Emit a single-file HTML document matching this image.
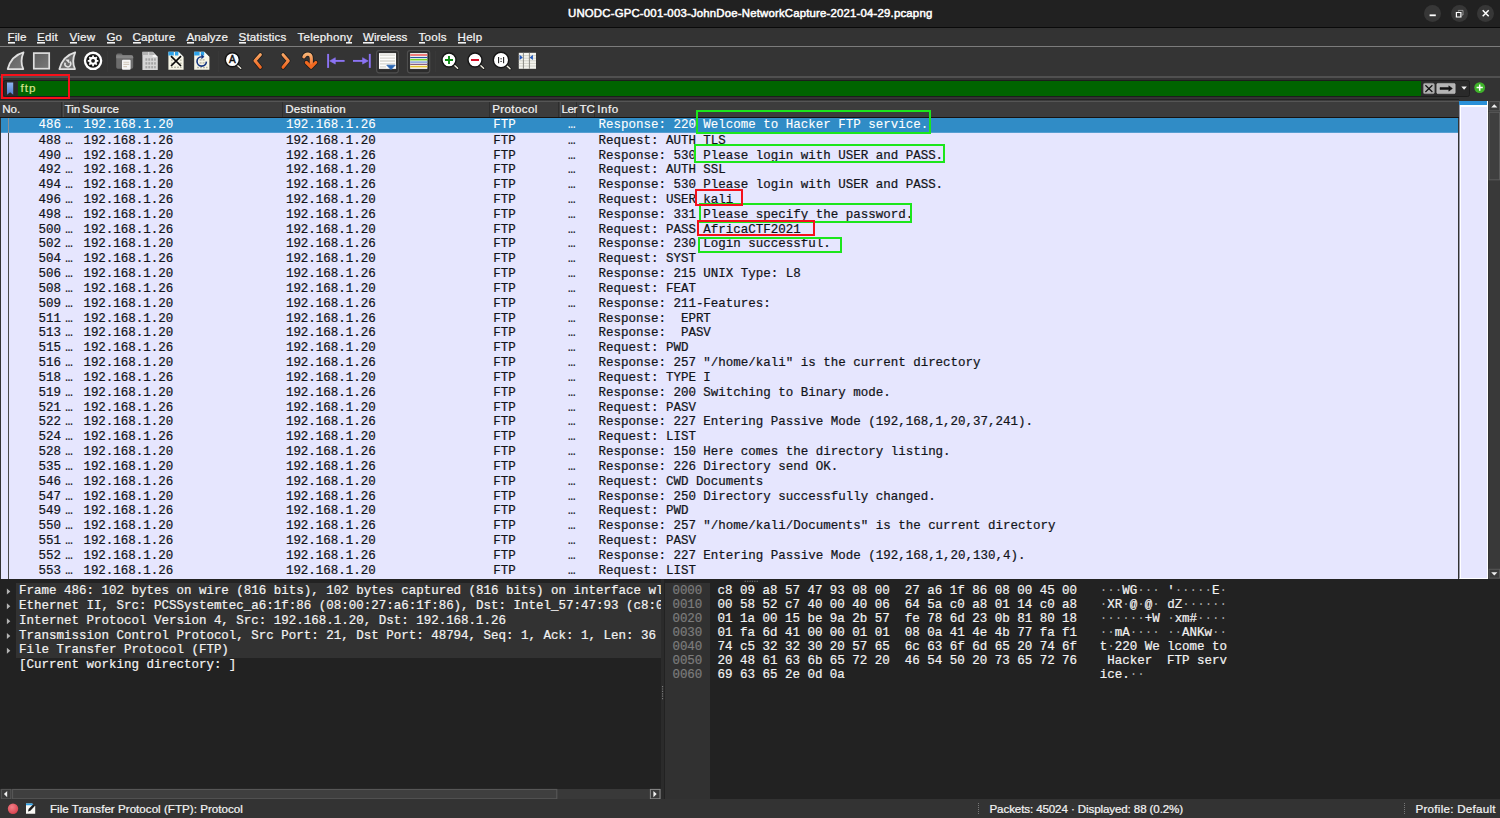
<!DOCTYPE html>
<html><head><meta charset="utf-8"><title>Wireshark</title>
<style>
*{box-sizing:border-box;margin:0;padding:0}
html,body{width:1500px;height:818px;overflow:hidden;background:#333;}
body{position:relative;-webkit-text-stroke:0.22px;font-family:"Liberation Sans",sans-serif;color:#f2f2f2;font-size:11.6px}
.abs{position:absolute}
.ui{position:absolute;white-space:nowrap;font-size:11.6px;line-height:14px;color:#f3f3f3;transform-origin:0 0}
#title{left:0;top:0;width:1500px;height:27.4px;background:#212121}
.wb{position:absolute;top:4.6px;width:17.2px;height:17.2px;border-radius:50%;background:#373737}
#menu{left:0;top:27px;width:1500px;height:19px;background:#333}
u{text-decoration:none;background:linear-gradient(#f3f3f3,#f3f3f3) no-repeat 0 100%/100% 1.6px;padding-bottom:1.1px}
#sep1{left:0;top:46px;width:1500px;height:1px;background:#7c7c7c}
#tool{left:0;top:47px;width:1500px;height:29px;background:#343434}
#sep2{left:0;top:76px;width:1500px;height:1.5px;background:#505050}
#fbar{left:0;top:77.5px;width:1500px;height:23px;background:#333}
#ffield{left:3.2px;top:79.6px;width:1466.8px;height:17.4px;background:#2a2a2a;border-radius:2.5px;border:1px solid #1d1d1d}
#fgreen{left:17.5px;top:80.5px;width:1403.5px;height:15.5px;background:#006400}
#redbox{left:1.3px;top:74.3px;width:68.6px;height:24.8px;border:2.7px solid #f8101a}
#hdr{left:0;top:99.3px;width:1459px;height:18.6px;background:linear-gradient(#222 0,#222 1.4px,#555 1.6px,#555 2.9px,#3c3c3c 3.1px,#3c3c3c 100%);border-bottom:1.1px solid #17120f}
#hdr i{position:absolute;top:3px;width:2.6px;height:14.4px;background:linear-gradient(90deg,#2e2e2e 0,#2e2e2e 1px,#3c3c3c 1px,#3c3c3c 1.6px,#4e4e4e 1.6px)}
#list{left:.9px;top:117.9px;width:1457.5px;height:460.9px;background:#e6e6fe;overflow:hidden;font-family:"Liberation Mono",monospace;font-size:12.495px;color:#12141a}
.r{position:relative;height:14.83px;line-height:14.83px;white-space:pre}
.r.sel{-webkit-text-stroke:0.1px;background:linear-gradient(#308cc6,#308cc6) no-repeat;background-size:100% 14.8px;color:#fff;height:15.8px}
.c{position:absolute;top:0}
.r.sel .c{top:.4px}
.no{left:0;width:60px;text-align:right}
.tm{left:64.3px}
.src{left:82.5px}
.dst{left:285px}
.pr{left:492.4px}
.ln{left:567.2px}
.inf{left:597.6px}
#rel{left:7.8px;top:117.6px;width:1.5px;height:461.2px;background:#4a4a4a}
#mini{left:1459px;top:101px;width:29px;height:477.8px;background:#e6e6fe;border:1.6px solid #fff;border-left:1px solid #9a9aa8;border-top:0}
#mini b{position:absolute;left:-1px;right:-.4px;top:0;z-index:2;height:4.4px;background:#2a90d8}
#mini s{position:absolute;left:1px;right:0;top:4.4px;height:1.2px;background:#fff}
#mini em{position:absolute;left:0;top:0;bottom:0;width:1px;background:#fff}
#vsb{left:1488.6px;top:101px;width:11.4px;height:477.8px;background:#393939}
#detail{left:0;top:578.8px;width:660.7px;height:210px;background:#222;overflow:hidden;font-family:"Liberation Mono",monospace;font-size:12.495px;color:#f2f2f2}
#detail .d{position:absolute;left:19.1px;width:660px;height:14.83px;line-height:14.83px;white-space:pre}
#dbg{position:absolute;left:15.8px;top:4.4px;width:660px;height:74.5px;background:#323232}
#detail svg{position:absolute;left:0;top:0}
#hsb{left:0;top:788.8px;width:660.7px;height:10.4px;background:#393939}
#split{left:660.7px;top:578.8px;width:3.7px;height:220.4px;background:#2b2b2b}
#hex{left:664.4px;top:578.8px;width:835.6px;height:220.4px;background:#222;overflow:hidden;font-family:"Liberation Mono",monospace;font-size:12.495px;color:#f2f2f2}
#hexoff{position:absolute;left:.5px;top:4.7px;width:45.3px;height:100%;background:#313131}
.h{position:absolute;left:0;height:14.05px;line-height:14.05px;white-space:pre}
.h .o{position:absolute;left:8px;color:#7c7c7c}
.h .b{position:absolute;left:53.1px}
.dt{color:#a6a6a6;-webkit-text-stroke:0}
.h .a{position:absolute;left:435.3px}
#status{left:0;top:799.2px;width:1500px;height:18.8px;background:#333}
.box{position:absolute;border:2.5px solid #1ce61c}
.box.red{border-color:#f5111b}
</style></head><body>
<div id="title" class="abs">
<div class="wb" style="left:1424.1px"></div><div class="wb" style="left:1450.8px"></div><div class="wb" style="left:1477.2px"></div>
<svg class="abs" style="left:1420px;top:0" width="80" height="27" viewBox="1420 0 80 27"><g stroke="#fff" stroke-width="1.3" fill="none"><path d="M1429.6 15.3h6.2" stroke-width="1.8"/><path d="M1456.4 12.5h4.5v4.5h-4.5z" stroke-width="1.2"/><path d="M1458.4 11.6v-1.2h4.6v4.6h-1.2" stroke="#a8a8a8" stroke-width=".8"/><path d="M1482.7 10.3l6 6m0-6l-6 6" stroke-width="1.5"/></g></svg>
</div>
<div id="menu" class="abs"></div>
<div id="sep1" class="abs"></div>
<div class="abs" style="left:0;top:26.5px;width:1500px;height:1.3px;background:#0a0a0a"></div>
<div id="tool" class="abs"></div>
<svg class="abs" style="left:0;top:47px" width="545" height="30" viewBox="0 47 545 30">
<defs>
<linearGradient id="og" gradientUnits="userSpaceOnUse" x1="0" y1="53" x2="0" y2="69"><stop offset="0" stop-color="#f9ac6a"/><stop offset="1" stop-color="#ee5f18"/></linearGradient>
<linearGradient id="gg" x1="0" y1="0" x2="1" y2="1"><stop offset="0" stop-color="#5e5e5e"/><stop offset="1" stop-color="#787878"/></linearGradient>
<linearGradient id="og2" gradientUnits="userSpaceOnUse" x1="0" y1="52" x2="0" y2="68"><stop offset="0" stop-color="#f9bd80"/><stop offset="1" stop-color="#f0641e"/></linearGradient>
</defs>
<!-- start capture fin -->
<path d="M23.5 52.3 C15.3 54.5 9.8 61 7.7 69.1 L23.3 69.1 C21.1 64.5 20.9 58.5 23.5 52.3Z" fill="url(#gg)" stroke="#e0e0e0" stroke-width="1.8" stroke-linejoin="round"/>
<!-- stop square -->
<rect x="33.8" y="53.1" width="15.4" height="15.6" fill="url(#gg)" stroke="#dedede" stroke-width="1.7"/>
<!-- restart fin -->
<path d="M75.2 52.3 C67 54.5 61.5 61 59.4 69.1 L75 69.1 C72.8 64.5 72.6 58.5 75.2 52.3Z" fill="url(#gg)" stroke="#e0e0e0" stroke-width="1.8" stroke-linejoin="round"/>
<path d="M65.3 62.6 a2.9 2.9 0 1 0 4.3 -0.9" fill="none" stroke="#e4e4e4" stroke-width="1.5"/>
<path d="M65.2 59.6 h4 v4z" fill="#e4e4e4"/>
<!-- options gear -->
<circle cx="93.05" cy="60.85" r="8.1" fill="#141414" stroke="#fff" stroke-width="2.3"/>
<g stroke="#fff" stroke-width="1.7"><path d="M93.05 55.55v10.6M87.75 60.85h10.6M89.3 57.1l7.5 7.5M89.3 64.6l7.5-7.5"/></g>
<circle cx="93.05" cy="60.85" r="4" fill="#fff"/>
<circle cx="93.05" cy="60.85" r="1.9" fill="#1c1c1c"/>
<!-- sep -->
<rect x="107" y="51" width="1" height="21" fill="#383838"/>
<!-- open folder -->
<path d="M116.2 55.2 q0-1.6 1.6-1.6 h3.6 l1.6 1.7 h8.4 q1.8 0 1.8 1.8 v10 q0 1.6-1.6 1.6 h-13.8 q-1.6 0-1.6-1.6z" fill="#6c6c6c"/>
<path d="M116.2 58.2h17v-1.2q0-1.7-1.8-1.7h-15.2z" fill="#858585"/>
<rect x="122" y="59.8" width="8.6" height="10" rx="1" fill="#f6f6f6"/>
<g stroke="#d2c9bc" stroke-width="1.1"><path d="M123.4 62.2h5.8M123.4 64.4h5.8M123.4 66.6h3.6"/></g>
<!-- save (disabled) -->
<path d="M142.4 51.8h10.2l5.2 5.2v13h-15.4z" fill="#d6d6d6"/>
<path d="M152.6 51.8l5.2 5.2h-5.2z" fill="#f4f4f4"/>
<path d="M142.6 52h5.4v3h-5.4zM149.2 52h3.4l2 2v1h-5.4z" fill="#b2b2b2"/>
<g fill="#a2a2a2"><rect x="145.4" y="58.3" width="1.9" height="2.4"/><rect x="148.3" y="58.3" width="1.9" height="2.4"/><rect x="151.2" y="58.3" width="1.9" height="2.4"/><rect x="154.1" y="58.3" width="1.7" height="2.4"/>
<rect x="145.4" y="62.2" width="1.9" height="2.4"/><rect x="148.3" y="62.2" width="1.9" height="2.4"/><rect x="151.2" y="62.2" width="1.9" height="2.4"/><rect x="154.1" y="62.2" width="1.7" height="2.4"/>
<rect x="145.4" y="66.1" width="1.9" height="2.2"/><rect x="148.3" y="66.1" width="1.9" height="2.2"/><rect x="151.2" y="66.1" width="1.9" height="2.2"/><rect x="154.1" y="66.1" width="1.7" height="2.2"/></g>
<!-- close file -->
<path d="M168.4 51.8h10l5.2 5.2v12.8h-15.2z" fill="#f6f5e6"/>
<path d="M168.4 51.8h5.4v3.6h-5.4zM175 51.8h3.4l3.4 3.6h-6.8z" fill="#2ea3ea"/>
<path d="M178.4 51.8l5.2 5.2h-5.2z" fill="#fbfbf3"/>
<g fill="#b9b9a9"><rect x="171" y="66.6" width="2" height="1.4"/><rect x="174" y="66.6" width="2" height="1.4"/><rect x="177" y="66.6" width="2" height="1.4"/><rect x="180" y="66.6" width="1.6" height="1.4"/><rect x="171" y="59.4" width="1.6" height="1.4"/><rect x="180" y="59.4" width="1.6" height="1.4"/><rect x="171" y="62.6" width="1.6" height="1.4"/><rect x="180" y="62.6" width="1.6" height="1.4"/></g>
<path d="M171 56.2l10 9.8M181 56.2l-10 9.8" stroke="#0a0a0a" stroke-width="1.7" fill="none"/>
<!-- reload -->
<path d="M194.2 51.8h10l5.2 5.2v12.8h-15.2z" fill="#f6f5e6"/>
<path d="M194.2 51.8h5.4v3.6h-5.4zM200.8 51.8h3.4l3.4 3.6h-6.8z" fill="#2ea3ea"/>
<path d="M204.2 51.8l5.2 5.2h-5.2z" fill="#fbfbf3"/>
<g fill="#b9b9a9"><rect x="197" y="66.8" width="2" height="1.4"/><rect x="200" y="66.8" width="2" height="1.4"/><rect x="203" y="66.8" width="2" height="1.4"/><rect x="206" y="66.8" width="1.6" height="1.4"/><rect x="199.6" y="59.2" width="2" height="1.4"/><rect x="202.6" y="59.2" width="2" height="1.4"/><rect x="199.6" y="62.2" width="2" height="1.4"/><rect x="202.6" y="62.2" width="2" height="1.4"/></g>
<path d="M206.4 61.6 a4.7 4.7 0 1 1 -4.7 -4.9" fill="none" stroke="#13347f" stroke-width="1.6"/>
<path d="M201.4 54.2l3 2.5-3 2.5z" fill="#13347f"/>
<!-- sep -->
<rect x="218" y="51" width="1" height="21" fill="#383838"/>
<!-- find -->
<path d="M237 65l3.8 3.3" stroke="#1c1c1c" stroke-width="2.8" stroke-linecap="round"/>
<path d="M237 65l3.7 3.2" stroke="#efece0" stroke-width="1.5" stroke-linecap="round"/>
<circle cx="232.3" cy="59.8" r="7" fill="#fff" stroke="#141414" stroke-width="1.4"/>
<text x="232.3" y="63.3" font-family="Liberation Sans, sans-serif" font-size="10" text-anchor="middle" fill="#111" stroke="#111" stroke-width=".45">A</text>
<!-- back / fwd -->
<g fill="none" stroke-linecap="round" stroke-linejoin="round">
<path d="M260.3 54.7l-5.3 6 5.3 6.6" stroke="#1a1a1a" stroke-width="4.4"/>
<path d="M260.3 54.7l-5.3 6 5.3 6.6" stroke="url(#og)" stroke-width="3"/>
<path d="M283 54.7l5.3 6-5.3 6.6" stroke="#1a1a1a" stroke-width="4.4"/>
<path d="M283 54.7l5.3 6-5.3 6.6" stroke="url(#og)" stroke-width="3"/>
<!-- goto -->
<path d="M303.9 56.8c1.6-3.6 7.4-4 7.4 1.6v7.4M306.4 62.5l4.7 4.7 4.6-4.7" stroke="#1a1a1a" stroke-width="4.6"/>
<path d="M303.9 56.8c1.6-3.6 7.4-4 7.4 1.6v7.4" stroke="url(#og2)" stroke-width="3.2"/>
<path d="M306.4 62.5l4.7 4.7 4.6-4.7" stroke="#f0681f" stroke-width="3.2"/>
</g>
<!-- first / last -->
<g stroke="#8b73f3" stroke-width="1.9" fill="none"><path d="M328.1 53.9v14"/><path d="M332 60.9h12.6"/><path d="M369.8 53.9v14"/><path d="M353 60.9h12.6"/></g>
<path d="M329.7 60.9l5.6-3.2v6.4zM368.2 60.9l-5.6-3.2v6.4z" fill="#8b73f3" stroke="#8b73f3" stroke-width=".6" stroke-linejoin="round"/>
<!-- autoscroll (checked) -->
<rect x="376.6" y="50.6" width="21.8" height="22.2" rx="2.5" fill="#2c2c2c" stroke="#4e4e4e" stroke-width="1.2"/>
<rect x="378.7" y="52.8" width="17.6" height="16.4" fill="#fdfdfb" stroke="#111" stroke-width=".6"/>
<g stroke="#d6d6d0" stroke-width="1.3"><path d="M380 55.2h15M380 58.1h15M380 61h15M380 63.9h15M380 66.8h6"/></g>
<path d="M386.8 65.2h8.4l-4.2 4.4z" fill="#2a66b4" stroke="#2a66b4" stroke-width=".8" stroke-linejoin="round"/>
<!-- colorize -->
<rect x="407.5" y="50.6" width="22.2" height="22.2" rx="2.5" fill="#2c2c2c" stroke="#4e4e4e" stroke-width="1.2"/>
<rect x="409.8" y="52.8" width="18" height="16.4" fill="#fdfdfb" stroke="#111" stroke-width=".6"/>
<g stroke-width="1.6"><path d="M410.2 55h17.2" stroke="#ee5d5d"/><path d="M410.2 57.5h17.2" stroke="#2b56a0" stroke-width="1.2"/><path d="M410.2 59.7h17.2" stroke="#78d32a"/><path d="M410.2 62.1h17.2" stroke="#8aa6dc"/><path d="M410.2 64.3h17.2" stroke="#73446f" stroke-width="1.1"/><path d="M410.2 66.6h17.2" stroke="#e4c02c"/></g>
<!-- sep -->
<rect x="435" y="51" width="1" height="21" fill="#383838"/>
<!-- zoom in/out/1:1 -->
<path d="M453.8 64.8l3.9 3.6" stroke="#1a1a1a" stroke-width="2.9" stroke-linecap="round"/>
<path d="M453.8 64.8l3.8 3.5" stroke="#efece0" stroke-width="1.5" stroke-linecap="round"/>
<circle cx="449" cy="60" r="7" fill="#fff" stroke="#141414" stroke-width="1.4"/>
<path d="M445 60h8M449 56v8" stroke="#0c8a14" stroke-width="1.9"/>
<path d="M479.8 64.8l3.9 3.6" stroke="#1a1a1a" stroke-width="2.9" stroke-linecap="round"/>
<path d="M479.8 64.8l3.8 3.5" stroke="#efece0" stroke-width="1.5" stroke-linecap="round"/>
<circle cx="475" cy="60" r="7" fill="#fff" stroke="#141414" stroke-width="1.4"/>
<path d="M471 60h8" stroke="#d2021c" stroke-width="1.9"/>
<path d="M506.2 65.2l3.9 3.6" stroke="#1a1a1a" stroke-width="2.9" stroke-linecap="round"/>
<path d="M506.2 65.2l3.8 3.5" stroke="#efece0" stroke-width="1.5" stroke-linecap="round"/>
<circle cx="501" cy="60" r="7.7" fill="#fff" stroke="#141414" stroke-width="1.4"/>
<path d="M498.6 57v6.2M503.6 57v6.2" stroke="#222" stroke-width="1.1"/><path d="M500.4 58.8h1.4M500.4 61.4h1.4" stroke="#222" stroke-width="1"/>
<!-- resize cols -->
<rect x="518.8" y="52.8" width="17.2" height="16" fill="#f4f4ee"/>
<g stroke="#c9c9c0" stroke-width=".8"><path d="M518.8 55.6h17.2M518.8 58.2h17.2M518.8 60.8h17.2M518.8 63.4h17.2M518.8 66h17.2"/></g>
<g stroke="#8a8a84" stroke-width="1"><path d="M523.4 52.8v16M529.4 52.8v16"/></g>
<path d="M519.6 54.8l3.2 2.6-3.2 2.6zM532.9 54.8l-3.2 2.6 3.2 2.6z" fill="#2359bd"/>
</svg>

<div id="sep2" class="abs"></div>
<div id="fbar" class="abs"></div>
<div id="ffield" class="abs"></div>
<div id="fgreen" class="abs"></div>
<svg class="abs" style="left:0;top:77px" width="1500" height="24" viewBox="0 77 1500 24">
<defs><linearGradient id="bk" x1="0" y1="0" x2="0" y2="1"><stop offset="0" stop-color="#8db4ee"/><stop offset="1" stop-color="#4f7fd0"/></linearGradient></defs>
<path d="M7 82.6h6.2v12.2l-3.1-2.6-3.1 2.6z" fill="url(#bk)"/>
<rect x="1423.4" y="83.3" width="11" height="10.4" rx="1.5" fill="#b0b0b0" stroke="#8a8a8a" stroke-width=".6"/>
<path d="M1425.4 85.2l7 6.8m0-6.8l-7 6.8" stroke="#111" stroke-width="1.2"/>
<rect x="1436.8" y="83.4" width="18.4" height="10.2" rx="1.2" fill="#b4b4b4" stroke="#cfcfcf" stroke-width=".5"/>
<path d="M1440 87.5h8.8v-1.7l3.6 2.7-3.6 2.7v-1.7h-8.8z" fill="#111" stroke="#111" stroke-width=".5" stroke-linejoin="round"/>
<path d="M1461.3 86.6h5.6l-2.8 3.2z" fill="#f0f0f0"/>
<circle cx="1479.7" cy="87.6" r="5.4" fill="#3fb32a"/>
<path d="M1476.6 87.6h6.2m-3.1-3.1v6.2" stroke="#fff" stroke-width="1.5"/>
</svg>
<div id="redbox" class="abs"></div>
<div id="hdr" class="abs"><i style="left:61px"></i><i style="left:78.6px"></i><i style="left:281.6px"></i><i style="left:488.6px"></i><i style="left:558.2px"></i><i style="left:575.9px"></i><i style="left:593.9px"></i></div>
<div id="list" class="abs">
<div class="r sel"><span class="c no">486</span><span class="c tm">…</span><span class="c src">192.168.1.20</span><span class="c dst">192.168.1.26</span><span class="c pr">FTP</span><span class="c ln">…</span><span class="c inf">Response: 220 Welcome to Hacker FTP service.</span></div>
<div class="r"><span class="c no">488</span><span class="c tm">…</span><span class="c src">192.168.1.26</span><span class="c dst">192.168.1.20</span><span class="c pr">FTP</span><span class="c ln">…</span><span class="c inf">Request: AUTH TLS</span></div>
<div class="r"><span class="c no">490</span><span class="c tm">…</span><span class="c src">192.168.1.20</span><span class="c dst">192.168.1.26</span><span class="c pr">FTP</span><span class="c ln">…</span><span class="c inf">Response: 530 Please login with USER and PASS.</span></div>
<div class="r"><span class="c no">492</span><span class="c tm">…</span><span class="c src">192.168.1.26</span><span class="c dst">192.168.1.20</span><span class="c pr">FTP</span><span class="c ln">…</span><span class="c inf">Request: AUTH SSL</span></div>
<div class="r"><span class="c no">494</span><span class="c tm">…</span><span class="c src">192.168.1.20</span><span class="c dst">192.168.1.26</span><span class="c pr">FTP</span><span class="c ln">…</span><span class="c inf">Response: 530 Please login with USER and PASS.</span></div>
<div class="r"><span class="c no">496</span><span class="c tm">…</span><span class="c src">192.168.1.26</span><span class="c dst">192.168.1.20</span><span class="c pr">FTP</span><span class="c ln">…</span><span class="c inf">Request: USER kali</span></div>
<div class="r"><span class="c no">498</span><span class="c tm">…</span><span class="c src">192.168.1.20</span><span class="c dst">192.168.1.26</span><span class="c pr">FTP</span><span class="c ln">…</span><span class="c inf">Response: 331 Please specify the password.</span></div>
<div class="r"><span class="c no">500</span><span class="c tm">…</span><span class="c src">192.168.1.26</span><span class="c dst">192.168.1.20</span><span class="c pr">FTP</span><span class="c ln">…</span><span class="c inf">Request: PASS AfricaCTF2021</span></div>
<div class="r"><span class="c no">502</span><span class="c tm">…</span><span class="c src">192.168.1.20</span><span class="c dst">192.168.1.26</span><span class="c pr">FTP</span><span class="c ln">…</span><span class="c inf">Response: 230 Login successful.</span></div>
<div class="r"><span class="c no">504</span><span class="c tm">…</span><span class="c src">192.168.1.26</span><span class="c dst">192.168.1.20</span><span class="c pr">FTP</span><span class="c ln">…</span><span class="c inf">Request: SYST</span></div>
<div class="r"><span class="c no">506</span><span class="c tm">…</span><span class="c src">192.168.1.20</span><span class="c dst">192.168.1.26</span><span class="c pr">FTP</span><span class="c ln">…</span><span class="c inf">Response: 215 UNIX Type: L8</span></div>
<div class="r"><span class="c no">508</span><span class="c tm">…</span><span class="c src">192.168.1.26</span><span class="c dst">192.168.1.20</span><span class="c pr">FTP</span><span class="c ln">…</span><span class="c inf">Request: FEAT</span></div>
<div class="r"><span class="c no">509</span><span class="c tm">…</span><span class="c src">192.168.1.20</span><span class="c dst">192.168.1.26</span><span class="c pr">FTP</span><span class="c ln">…</span><span class="c inf">Response: 211-Features:</span></div>
<div class="r"><span class="c no">511</span><span class="c tm">…</span><span class="c src">192.168.1.20</span><span class="c dst">192.168.1.26</span><span class="c pr">FTP</span><span class="c ln">…</span><span class="c inf">Response:  EPRT</span></div>
<div class="r"><span class="c no">513</span><span class="c tm">…</span><span class="c src">192.168.1.20</span><span class="c dst">192.168.1.26</span><span class="c pr">FTP</span><span class="c ln">…</span><span class="c inf">Response:  PASV</span></div>
<div class="r"><span class="c no">515</span><span class="c tm">…</span><span class="c src">192.168.1.26</span><span class="c dst">192.168.1.20</span><span class="c pr">FTP</span><span class="c ln">…</span><span class="c inf">Request: PWD</span></div>
<div class="r"><span class="c no">516</span><span class="c tm">…</span><span class="c src">192.168.1.20</span><span class="c dst">192.168.1.26</span><span class="c pr">FTP</span><span class="c ln">…</span><span class="c inf">Response: 257 &quot;/home/kali&quot; is the current directory</span></div>
<div class="r"><span class="c no">518</span><span class="c tm">…</span><span class="c src">192.168.1.26</span><span class="c dst">192.168.1.20</span><span class="c pr">FTP</span><span class="c ln">…</span><span class="c inf">Request: TYPE I</span></div>
<div class="r"><span class="c no">519</span><span class="c tm">…</span><span class="c src">192.168.1.20</span><span class="c dst">192.168.1.26</span><span class="c pr">FTP</span><span class="c ln">…</span><span class="c inf">Response: 200 Switching to Binary mode.</span></div>
<div class="r"><span class="c no">521</span><span class="c tm">…</span><span class="c src">192.168.1.26</span><span class="c dst">192.168.1.20</span><span class="c pr">FTP</span><span class="c ln">…</span><span class="c inf">Request: PASV</span></div>
<div class="r"><span class="c no">522</span><span class="c tm">…</span><span class="c src">192.168.1.20</span><span class="c dst">192.168.1.26</span><span class="c pr">FTP</span><span class="c ln">…</span><span class="c inf">Response: 227 Entering Passive Mode (192,168,1,20,37,241).</span></div>
<div class="r"><span class="c no">524</span><span class="c tm">…</span><span class="c src">192.168.1.26</span><span class="c dst">192.168.1.20</span><span class="c pr">FTP</span><span class="c ln">…</span><span class="c inf">Request: LIST</span></div>
<div class="r"><span class="c no">528</span><span class="c tm">…</span><span class="c src">192.168.1.20</span><span class="c dst">192.168.1.26</span><span class="c pr">FTP</span><span class="c ln">…</span><span class="c inf">Response: 150 Here comes the directory listing.</span></div>
<div class="r"><span class="c no">535</span><span class="c tm">…</span><span class="c src">192.168.1.20</span><span class="c dst">192.168.1.26</span><span class="c pr">FTP</span><span class="c ln">…</span><span class="c inf">Response: 226 Directory send OK.</span></div>
<div class="r"><span class="c no">546</span><span class="c tm">…</span><span class="c src">192.168.1.26</span><span class="c dst">192.168.1.20</span><span class="c pr">FTP</span><span class="c ln">…</span><span class="c inf">Request: CWD Documents</span></div>
<div class="r"><span class="c no">547</span><span class="c tm">…</span><span class="c src">192.168.1.20</span><span class="c dst">192.168.1.26</span><span class="c pr">FTP</span><span class="c ln">…</span><span class="c inf">Response: 250 Directory successfully changed.</span></div>
<div class="r"><span class="c no">549</span><span class="c tm">…</span><span class="c src">192.168.1.26</span><span class="c dst">192.168.1.20</span><span class="c pr">FTP</span><span class="c ln">…</span><span class="c inf">Request: PWD</span></div>
<div class="r"><span class="c no">550</span><span class="c tm">…</span><span class="c src">192.168.1.20</span><span class="c dst">192.168.1.26</span><span class="c pr">FTP</span><span class="c ln">…</span><span class="c inf">Response: 257 &quot;/home/kali/Documents&quot; is the current directory</span></div>
<div class="r"><span class="c no">551</span><span class="c tm">…</span><span class="c src">192.168.1.26</span><span class="c dst">192.168.1.20</span><span class="c pr">FTP</span><span class="c ln">…</span><span class="c inf">Request: PASV</span></div>
<div class="r"><span class="c no">552</span><span class="c tm">…</span><span class="c src">192.168.1.20</span><span class="c dst">192.168.1.26</span><span class="c pr">FTP</span><span class="c ln">…</span><span class="c inf">Response: 227 Entering Passive Mode (192,168,1,20,130,4).</span></div>
<div class="r"><span class="c no">553</span><span class="c tm">…</span><span class="c src">192.168.1.26</span><span class="c dst">192.168.1.20</span><span class="c pr">FTP</span><span class="c ln">…</span><span class="c inf">Request: LIST</span></div>
</div>
<div id="rel" class="abs"></div><div class="abs" style="left:7.8px;top:117.9px;width:1.5px;height:14.8px;background:#8b9197"></div>
<div id="mini" class="abs"><b></b><s></s><em></em></div>
<div id="vsb" class="abs"></div>
<svg class="abs" style="left:1488px;top:100px" width="12" height="480" viewBox="1488 100 12 480">
<rect x="1489.1" y="101.6" width="10.4" height="9.2" fill="#3a3a3a" stroke="#575757" stroke-width="1"/>
<path d="M1491.2 107.6h6.2l-3.1-3.3z" fill="#f0f0f0"/>
<rect x="1489.1" y="112.3" width="10.4" height="67.5" fill="#3f3f3f" stroke="#5a5a5a" stroke-width="1"/>
<rect x="1489.1" y="569.3" width="10.4" height="8.8" fill="#3a3a3a" stroke="#575757" stroke-width="1"/>
<path d="M1491.2 572.2h6.2l-3.1 3.3z" fill="#f0f0f0"/>
</svg>
<div class="box " style="left:696.2px;top:109.7px;width:234.6px;height:24.8px"></div>
<div class="box " style="left:694.3px;top:144.1px;width:250.8px;height:18.6px"></div>
<div class="box " style="left:698.5px;top:202.8px;width:213.8px;height:19.8px"></div>
<div class="box " style="left:698.1px;top:236.6px;width:144.4px;height:16.5px"></div>
<div class="box red" style="left:694.9px;top:188.9px;width:48.4px;height:17.1px"></div>
<div class="box red" style="left:696.8px;top:220.3px;width:118.6px;height:15.7px"></div>

<div id="detail" class="abs">
<div id="dbg"></div>
<div class="d alt" style="top:5.30px">Frame 486: 102 bytes on wire (816 bits), 102 bytes captured (816 bits) on interface wlan0, id 0</div>
<div class="d alt" style="top:20.13px">Ethernet II, Src: PCSSystemtec_a6:1f:86 (08:00:27:a6:1f:86), Dst: Intel_57:47:93 (c8:09:a8:57:47:93)</div>
<div class="d alt" style="top:34.96px">Internet Protocol Version 4, Src: 192.168.1.20, Dst: 192.168.1.26</div>
<div class="d alt" style="top:49.79px">Transmission Control Protocol, Src Port: 21, Dst Port: 48794, Seq: 1, Ack: 1, Len: 36</div>
<div class="d alt" style="top:64.62px">File Transfer Protocol (FTP)</div>
<div class="d" style="top:79.45px">[Current working directory: ]</div>
<svg width="16" height="210" viewBox="0 0 16 210" fill="#b4b4b4"><path d="M6.9 9.50l3.4 3-3.4 3z"/><path d="M6.9 24.33l3.4 3-3.4 3z"/><path d="M6.9 39.16l3.4 3-3.4 3z"/><path d="M6.9 53.99l3.4 3-3.4 3z"/><path d="M6.9 68.82l3.4 3-3.4 3z"/></svg>
</div>
<div id="hsb" class="abs"></div>
<svg class="abs" style="left:0;top:788px" width="662" height="12" viewBox="0 788 662 12">
<rect x="1.6" y="789.4" width="9.2" height="9.4" fill="#3a3a3a" stroke="#575757" stroke-width="1"/>
<path d="M7.2 791l-3.3 3.1 3.3 3.1z" fill="#f0f0f0"/>
<rect x="12.6" y="789.4" width="544.2" height="9.4" fill="#3f3f3f" stroke="#5a5a5a" stroke-width="1"/>
<rect x="650.4" y="789.4" width="9.6" height="9.4" fill="#3a3a3a" stroke="#8a8a8a" stroke-width="1"/>
<path d="M653.4 791l3.3 3.1-3.3 3.1z" fill="#f0f0f0"/>
</svg>
<div id="split" class="abs"></div>

<div id="hex" class="abs"><div id="hexoff"></div>
<div class="h" style="top:5.50px"><span class="o">0000</span><span class="b">c8 09 a8 57 47 93 08 00  27 a6 1f 86 08 00 45 00</span><span class="a"><span class="dt">···</span>WG<span class="dt">···</span> &#x27;<span class="dt">·····</span>E<span class="dt">·</span></span></div>
<div class="h" style="top:19.45px"><span class="o">0010</span><span class="b">00 58 52 c7 40 00 40 06  64 5a c0 a8 01 14 c0 a8</span><span class="a"><span class="dt">·</span>XR<span class="dt">·</span>@<span class="dt">·</span>@<span class="dt">·</span> dZ<span class="dt">······</span></span></div>
<div class="h" style="top:33.40px"><span class="o">0020</span><span class="b">01 1a 00 15 be 9a 2b 57  fe 78 6d 23 0b 81 80 18</span><span class="a"><span class="dt">······</span>+W <span class="dt">·</span>xm#<span class="dt">····</span></span></div>
<div class="h" style="top:47.35px"><span class="o">0030</span><span class="b">01 fa 6d 41 00 00 01 01  08 0a 41 4e 4b 77 fa f1</span><span class="a"><span class="dt">··</span>mA<span class="dt">····</span> <span class="dt">··</span>ANKw<span class="dt">··</span></span></div>
<div class="h" style="top:61.30px"><span class="o">0040</span><span class="b">74 c5 32 32 30 20 57 65  6c 63 6f 6d 65 20 74 6f</span><span class="a">t<span class="dt">·</span>220 We lcome to</span></div>
<div class="h" style="top:75.25px"><span class="o">0050</span><span class="b">20 48 61 63 6b 65 72 20  46 54 50 20 73 65 72 76</span><span class="a"> Hacker  FTP serv</span></div>
<div class="h" style="top:89.20px"><span class="o">0060</span><span class="b">69 63 65 2e 0d 0a</span><span class="a">ice.<span class="dt">··</span></span></div>
</div>
<svg class="abs" style="left:660px;top:578px" width="100" height="125" viewBox="660 578 100 125" fill="#7a7a7a"><path d="M744.6 580.7h1.3v1.1h-1.3zM747 580.7h1.3v1.1H747zM749.4 580.7h1.3v1.1h-1.3zM751.8 580.7h1.3v1.1h-1.3zM754.2 580.7h1.3v1.1h-1.3zM756.6 580.7h1.3v1.1h-1.3z"/><path d="M662 686h1.1v1.2H662zM662 688.4h1.1v1.2H662zM662 690.8h1.1v1.2H662zM662 693.2h1.1v1.2H662zM662 695.6h1.1v1.2H662zM662 698h1.1v1.2H662z"/></svg>
<div id="status" class="abs"></div>
<svg class="abs" style="left:0;top:799px" width="1500" height="19" viewBox="0 799 1500 19">
<defs><radialGradient id="rc" cx=".4" cy=".35" r=".7"><stop offset="0" stop-color="#f08088"/><stop offset="1" stop-color="#d8404c"/></radialGradient></defs>
<circle cx="13" cy="808.7" r="5.2" fill="url(#rc)"/>
<path d="M26 803.6h6.2l3 3v7.2h-9.2z" fill="#f8f8f4"/><path d="M26 803.6h6.2l1.4 1.6h-7.6z" fill="#2ea3ea"/>
<path d="M28 811.4l.6-2.4 4.6-4.8 1.8 1.6-4.6 4.9z" fill="#1c1c1c"/>
<g fill="#777"><rect x="978" y="803" width="1" height="1"/><rect x="978" y="805" width="1" height="1"/><rect x="978" y="807" width="1" height="1"/><rect x="978" y="809" width="1" height="1"/><rect x="978" y="811" width="1" height="1"/><rect x="978" y="813" width="1" height="1"/>
<rect x="1404" y="803" width="1" height="1"/><rect x="1404" y="805" width="1" height="1"/><rect x="1404" y="807" width="1" height="1"/><rect x="1404" y="809" width="1" height="1"/><rect x="1404" y="811" width="1" height="1"/><rect x="1404" y="813" width="1" height="1"/></g>
</svg>
<div class="ui" id="u0" style="letter-spacing:0.181px;left:568.0px;top:6px;font-size:11.4px;color:#fff;-webkit-text-stroke:0.5px">UNODC-GPC-001-003-JohnDoe-NetworkCapture-2021-04-29.pcapng</div>
<div class="ui" id="u1" style="letter-spacing:0.049px;left:7.5px;top:29.5px;"><u>F</u>ile</div>
<div class="ui" id="u2" style="letter-spacing:0.229px;left:37.0px;top:29.5px;"><u>E</u>dit</div>
<div class="ui" id="u3" style="letter-spacing:0.241px;left:69.5px;top:29.5px;"><u>V</u>iew</div>
<div class="ui" id="u4" style="letter-spacing:-0.042px;left:106.5px;top:29.5px;"><u>G</u>o</div>
<div class="ui" id="u5" style="letter-spacing:0.236px;left:132.5px;top:29.5px;"><u>C</u>apture</div>
<div class="ui" id="u6" style="letter-spacing:0.021px;left:186.5px;top:29.5px;"><u>A</u>nalyze</div>
<div class="ui" id="u7" style="letter-spacing:0.151px;left:238.5px;top:29.5px;"><u>S</u>tatistics</div>
<div class="ui" id="u8" style="letter-spacing:0.227px;left:297.5px;top:29.5px;">Telephon<u>y</u></div>
<div class="ui" id="u9" style="letter-spacing:-0.009px;left:363.0px;top:29.5px;"><u>W</u>ireless</div>
<div class="ui" id="u10" style="letter-spacing:0.264px;left:418.5px;top:29.5px;"><u>T</u>ools</div>
<div class="ui" id="u11" style="letter-spacing:0.260px;left:457.5px;top:29.5px;"><u>H</u>elp</div>
<div class="ui" id="u12" style="letter-spacing:1.003px;left:20.5px;top:81.3px;color:#d8e28c">ftp</div>
<div class="ui" id="u13" style="letter-spacing:0.051px;left:2.2px;top:101.9px;">No.</div>
<div class="ui" id="u14" style="letter-spacing:-0.129px;left:64.8px;top:101.9px;">Tin</div>
<div class="ui" id="u15" style="letter-spacing:-0.006px;left:82.2px;top:101.9px;">Source</div>
<div class="ui" id="u16" style="letter-spacing:0.262px;left:285.2px;top:101.9px;">Destination</div>
<div class="ui" id="u17" style="letter-spacing:0.371px;left:492.2px;top:101.9px;">Protocol</div>
<div class="ui" id="u18" style="letter-spacing:-0.389px;left:561.5px;top:101.9px;">Ler</div>
<div class="ui" id="u19" style="letter-spacing:-0.134px;left:579.5px;top:101.9px;">TC</div>
<div class="ui" id="u20" style="letter-spacing:0.539px;left:597.2px;top:101.9px;">Info</div>
<div class="ui" id="u21" style="letter-spacing:0.024px;left:50.0px;top:802px;">File Transfer Protocol (FTP): Protocol</div>
<div class="ui" id="u22" style="letter-spacing:-0.117px;left:989.5px;top:802px;">Packets: 45024 · Displayed: 88 (0.2%)</div>
<div class="ui" id="u23" style="letter-spacing:0.260px;left:1415.5px;top:802px;">Profile: Default</div>
</body></html>
